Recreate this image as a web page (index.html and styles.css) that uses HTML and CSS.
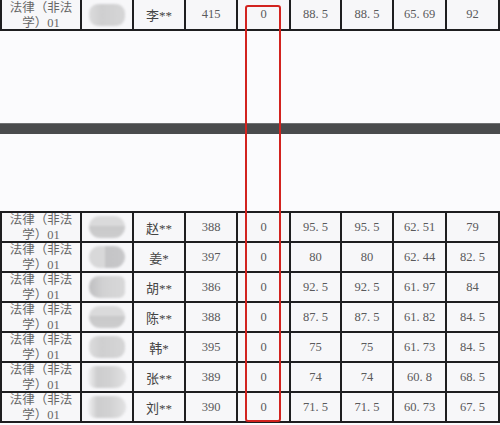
FILE: index.html
```html
<!DOCTYPE html>
<html lang="zh">
<head>
<meta charset="utf-8">
<link rel="stylesheet" href="styles.css">
</head>
<body>
<div class="page">
  <div class="grid top">
    <div class="c major"><span>法律（非法</span><span>学）01</span></div>
    <div class="c"><div class="blob b1"></div></div>
    <div class="c name">李**</div>
    <div class="c num">415</div>
    <div class="c num">0</div>
    <div class="c num">88. 5</div>
    <div class="c num">88. 5</div>
    <div class="c num">65. 69</div>
    <div class="c num">92</div>
  </div>

  <div class="bar"></div>

  <div class="grid bottom">
    <div class="c major"><span>法律（非法</span><span>学）01</span></div>
    <div class="c"><div class="blob b2"></div></div>
    <div class="c name">赵**</div>
    <div class="c num">388</div>
    <div class="c num">0</div>
    <div class="c num">95. 5</div>
    <div class="c num">95. 5</div>
    <div class="c num">62. 51</div>
    <div class="c num">79</div>

    <div class="c major"><span>法律（非法</span><span>学）01</span></div>
    <div class="c"><div class="blob b3"></div></div>
    <div class="c name">姜*</div>
    <div class="c num">397</div>
    <div class="c num">0</div>
    <div class="c num">80</div>
    <div class="c num">80</div>
    <div class="c num">62. 44</div>
    <div class="c num">82. 5</div>

    <div class="c major"><span>法律（非法</span><span>学）01</span></div>
    <div class="c"><div class="blob b4"></div></div>
    <div class="c name">胡**</div>
    <div class="c num">386</div>
    <div class="c num">0</div>
    <div class="c num">92. 5</div>
    <div class="c num">92. 5</div>
    <div class="c num">61. 97</div>
    <div class="c num">84</div>

    <div class="c major"><span>法律（非法</span><span>学）01</span></div>
    <div class="c"><div class="blob b2"></div></div>
    <div class="c name">陈**</div>
    <div class="c num">388</div>
    <div class="c num">0</div>
    <div class="c num">87. 5</div>
    <div class="c num">87. 5</div>
    <div class="c num">61. 82</div>
    <div class="c num">84. 5</div>

    <div class="c major"><span>法律（非法</span><span>学）01</span></div>
    <div class="c"><div class="blob b1"></div></div>
    <div class="c name">韩*</div>
    <div class="c num">395</div>
    <div class="c num">0</div>
    <div class="c num">75</div>
    <div class="c num">75</div>
    <div class="c num">61. 73</div>
    <div class="c num">84. 5</div>

    <div class="c major"><span>法律（非法</span><span>学）01</span></div>
    <div class="c"><div class="blob b5"></div></div>
    <div class="c name">张**</div>
    <div class="c num">389</div>
    <div class="c num">0</div>
    <div class="c num">74</div>
    <div class="c num">74</div>
    <div class="c num">60. 8</div>
    <div class="c num">68. 5</div>

    <div class="c major"><span>法律（非法</span><span>学）01</span></div>
    <div class="c"><div class="blob b5"></div></div>
    <div class="c name">刘**</div>
    <div class="c num">390</div>
    <div class="c num">0</div>
    <div class="c num">71. 5</div>
    <div class="c num">71. 5</div>
    <div class="c num">60. 73</div>
    <div class="c num">67. 5</div>
  </div>

  <div class="highlight"></div>
</div>
</body>
</html>
```

FILE: styles.css
```css
html, body {
  margin: 0;
  padding: 0;
  background: #fbfbfd;
}

.page {
  position: relative;
  width: 500px;
  height: 425px;
  overflow: hidden;
  font-family: "Liberation Serif", "Noto Sans CJK SC", serif;
  color: #555;
}

.grid {
  display: grid;
  grid-template-columns: 78px 50px 50px 50px 51px 49px 50px 51px 51px;
  grid-auto-rows: 28px;
  gap: 2px;
  padding: 2px;
  background: #1e1e20;
  width: 500px;
  box-sizing: border-box;
}

.grid.top {
  padding-top: 0;
  grid-auto-rows: 29px;
}

.grid.bottom {
  margin-top: 77px;
}

.c {
  background: #f7f7f9;
  display: flex;
  align-items: center;
  justify-content: center;
  overflow: hidden;
  font-size: 12.5px;
}

.num {
  color: #5a5a5c;
}

.name {
  color: #444;
  font-size: 13px;
}

.major {
  flex-direction: column;
  justify-content: flex-start;
  font-size: 12.5px;
  line-height: 15px;
  padding-top: 0;
  color: #666;
}

.top .major {
  padding-top: 1px;
}

.major span {
  white-space: nowrap;
}

.bar {
  margin-top: 92px;
  height: 11px;
  background: #4a4b4d;
  border-top: 1px solid #707173;
  box-sizing: border-box;
}

.blob {
  width: 36px;
  height: 22px;
  border-radius: 9px;
  background: linear-gradient(90deg, #dcdcdd 0%, #cfcfd0 35%, #d6d6d7 100%);
  filter: blur(1.2px);
}

.blob.b2 {
  background: linear-gradient(180deg, #dadadb 0%, #dadadb 45%, #c9c9ca 46%, #cdcdce 100%);
  border-radius: 11px;
}

.blob.b3 {
  border-radius: 12px;
  background: linear-gradient(90deg, #d8d8d9 0%, #d8d8d9 45%, #c4c4c6 46%, #c8c8ca 100%);
}

.blob.b4 {
  border-radius: 10px 6px 6px 10px;
  background: linear-gradient(90deg, #bfbfc1 0%, #d2d2d3 40%, #d8d8d9 100%);
}

.blob.b5 {
  width: 38px;
  border-radius: 8px 12px 12px 8px;
  background: linear-gradient(90deg, #f0f0f1 0%, #cdcdce 25%, #d2d2d3 60%, #e2e2e3 100%);
}

.highlight {
  position: absolute;
  left: 245px;
  top: 5px;
  width: 36px;
  height: 417px;
  border: 2px solid #d2231f;
  border-radius: 3px;
  box-sizing: border-box;
}
```
